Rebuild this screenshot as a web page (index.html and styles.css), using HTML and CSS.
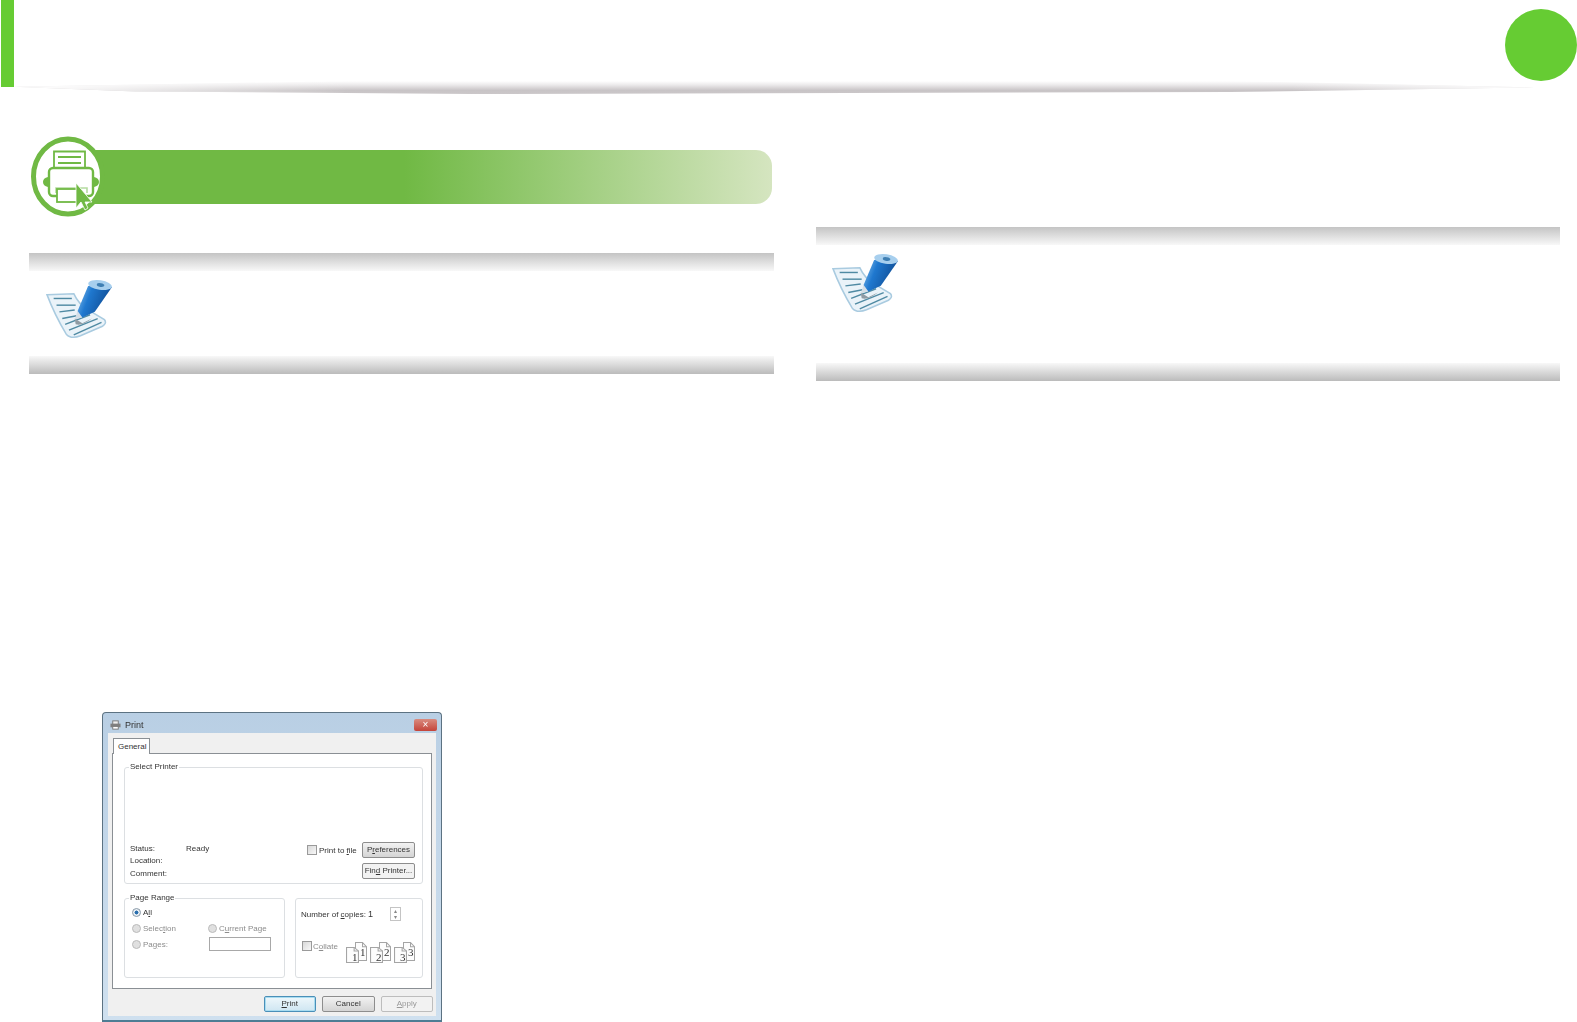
FILE: index.html
```html
<!DOCTYPE html>
<html lang="en">

<head>
  <meta charset="UTF-8">
  <meta name="viewport" content="width=device-width, initial-scale=1.0">
  <title>Printing</title>
  <link rel="stylesheet" href="styles.css">
</head>

<body>
  <svg class="defs" width="0" height="0">
    <defs>
      <linearGradient id="pencil" x1="0" y1="0" x2="1" y2="0.35">
        <stop offset="0" stop-color="#8cc4ee" />
        <stop offset="0.4" stop-color="#1f78cf" />
        <stop offset="1" stop-color="#0f4c94" />
      </linearGradient>
      <symbol id="note-icon" viewBox="0 0 70 64">
        <path d="M1 17 L29 16 Q34 27 44 33 L61 43 Q64 47 59 50 L36 60 Q26 64 21 58 Q9 38 1 17Z" fill="#eaf3f9" stroke="#a9cbe0" stroke-width="1.6" />
        <g fill="none" stroke="#4f8aa3" stroke-width="1.5">
          <path d="M8 21 L27 21" />
          <path d="M11 28 L31 28" />
          <path d="M14 35 L30 33" />
          <path d="M17 42 L32 39" />
          <path d="M20 48 L46 38" />
          <path d="M24 54 L54 42" />
          <path d="M29 59 L58 46" />
        </g>
        <path d="M30 42 L38 47 L48 42 Q38 50 31 48Z" fill="#8f9ba3" />
        <path d="M33 34 L38 41 L30 43Z" fill="#d5dfe7" />
        <path d="M44 8 L33 34 L38 41 L51 35 L69 9Z" fill="url(#pencil)" />
        <ellipse cx="56.500" cy="7" rx="12.500" ry="5" transform="rotate(8 56.500 7)" fill="#a7cfee" />
        <ellipse cx="57" cy="7" rx="4" ry="2" transform="rotate(8 57 7)" fill="#3f7fb3" />
      </symbol>
      <symbol id="doc" viewBox="0 0 12 18" preserveAspectRatio="none">
        <path d="M0.500 0.500 H7.500 L11.500 4.500 V17.500 H0.500Z" fill="#fdfdfd" stroke="#a5a5a5" />
        <path d="M7.500 0.500 V4.500 H11.500" fill="none" stroke="#a5a5a5" />
      </symbol>
    </defs>
  </svg>

  <div class="top-bar">
    <div class="top-stripe"></div>
    <div class="top-line"></div>
    <div class="top-circle"></div>
  </div>

  <div class="columns">
    <div class="col">
      <div class="section-head">
        <div class="section-bar"></div>
        <svg class="section-icon" viewBox="0 0 75 81">
          <ellipse cx="37" cy="40.500" rx="34.500" ry="37.500" fill="#fff" stroke="#70b944" stroke-width="5" />
          <g fill="none" stroke="#70b944">
            <path d="M23 32 V15.500 H54 V32" stroke-width="1.800" />
            <path d="M27 21 H50 M27 27 H50" stroke-width="1.800" />
            <rect x="18" y="32" width="44" height="28" rx="4" stroke-width="2.400" />
            <path d="M25 57 V52 H56 V57" stroke="#b4dba0" stroke-width="1.600" />
          </g>
          <path d="M17 41 Q12 42 12 46 Q12 50 17 51Z M63 41 Q68 42 68 46 Q68 50 63 51Z" fill="#70b944" />
          <rect x="26" y="53" width="20" height="13" fill="#fff" stroke="#70b944" stroke-width="1.800" />
          <path d="M45 47 L45 72 L50 66 L54 74 L57 72 L54 66 L61 66Z" fill="#70b944" stroke="#fff" stroke-width="0.800" />
        </svg>
      </div>

      <div class="note note-left">
        <div class="note-band"></div>
        <div class="note-body">
          <svg class="note-icon"><use href="#note-icon" /></svg>
        </div>
        <div class="note-band bottom"></div>
      </div>

      <div class="dialog">
        <div class="dialog-title">
          <svg class="title-printer" viewBox="0 0 12 10">
            <rect x="3" y="0.500" width="6" height="4" fill="#eee" stroke="#777" />
            <rect x="0.500" y="3.500" width="11" height="4" fill="#7f7f7f" />
            <rect x="3" y="6.500" width="6" height="3" fill="#fff" stroke="#777" />
          </svg>
          <span>Print</span>
          <div class="close-btn">×</div>
        </div>

        <div class="dialog-inner">
          <div class="tab">General</div>
          <div class="panel">
            <fieldset class="group printer-group">
              <legend>Select Printer</legend>
              <div class="printer-rows">
                <div class="status-labels">
                  <div class="status-row"><span class="status-key">Status:</span><span>Ready</span></div>
                  <div class="status-row">Location:</div>
                  <div class="status-row">Comment:</div>
                </div>
                <label class="check print-file"><span class="box"></span><span>Print to <u>f</u>ile</span></label>
                <div class="printer-btns">
                  <div class="btn grey">P<u>r</u>eferences</div>
                  <div class="btn">Fin<u>d</u> Printer...</div>
                </div>
              </div>
            </fieldset>

            <div class="lower-groups">
              <fieldset class="group range-group">
                <legend>Page Range</legend>
                <div class="range-grid">
                  <label class="radio on full"><span class="dot"></span><span>A<u>l</u>l</span></label>
                  <label class="radio off"><span class="dot"></span><span>Selec<u>t</u>ion</span></label>
                  <label class="radio off"><span class="dot"></span><span>C<u>u</u>rrent Page</span></label>
                  <label class="radio off"><span class="dot"></span><span>Pa<u>g</u>es:</span></label>
                  <div class="pages-input"></div>
                </div>
              </fieldset>

              <fieldset class="group copies-group">
                <div class="copies-row">
                  <span class="copies-label">Number of <u>c</u>opies:</span>
                  <div class="copies-input">1</div>
                  <div class="spinner"><span>▴</span><span>▾</span></div>
                </div>
                <div class="collate-row">
                  <label class="check off"><span class="box"></span><span>C<u>o</u>llate</span></label>
                  <div class="collate-docs">
                    <div class="doc-pair"><svg class="doc"><use href="#doc" /></svg><svg class="doc front"><use href="#doc" /></svg><span class="num back-num">1</span><span class="num front-num">1</span></div>
                    <div class="doc-pair"><svg class="doc"><use href="#doc" /></svg><svg class="doc front"><use href="#doc" /></svg><span class="num back-num">2</span><span class="num front-num">2</span></div>
                    <div class="doc-pair"><svg class="doc"><use href="#doc" /></svg><svg class="doc front"><use href="#doc" /></svg><span class="num back-num">3</span><span class="num front-num">3</span></div>
                  </div>
                </div>
              </fieldset>
            </div>
          </div>
          <div class="dialog-footer">
            <div class="btn wide primary"><u>P</u>rint</div>
            <div class="btn wide grey">Cancel</div>
            <div class="btn wide disabled"><u>A</u>pply</div>
          </div>
        </div>
      </div>
    </div>

    <div class="col">
      <div class="note note-right">
        <div class="note-band"></div>
        <div class="note-body">
          <svg class="note-icon"><use href="#note-icon" /></svg>
        </div>
        <div class="note-band bottom"></div>
      </div>
    </div>
  </div>
</body>

</html>
```

FILE: styles.css
```css
* {
  margin: 0;
  padding: 0;
  box-sizing: border-box;
}

html,
body {
  height: 100%;
  overflow: hidden;
}

body {
  font-family: 'Liberation Sans', Arial, sans-serif;
  background: white;
  color: #333;
}

.defs {
  position: absolute;
}

/* top of the page */
.top-bar {
  position: relative;
  height: 95px;
  display: flex;
  justify-content: space-between;
  align-items: flex-start;
}

.top-stripe {
  width: 13px;
  height: 87px;
  margin-left: 1px;
  background: #66cc33;
}

.top-circle {
  width: 72px;
  height: 72px;
  margin-top: 9px;
  border-radius: 50%;
  background: #66cc33;
}

.top-line {
  position: absolute;
  left: 14px;
  top: 81px;
  width: 1520px;
  height: 13px;
  background:
    linear-gradient(90deg, #fff 0%, transparent 22%, transparent 84%, #fff 100%),
    linear-gradient(180deg, #fff 0%, #eceaeb 30%, #c8c4c6 72%, #cbc7c9 100%);
  clip-path: polygon(0 45%, 22% 0, 80% 0, 100% 50%, 80% 85%, 30% 100%, 8% 80%);
}

/* two columns */
.columns {
  display: grid;
  grid-template-columns: 745px 744px;
  column-gap: 42px;
  padding: 55px 0 0 29px;
}

.section-head {
  position: relative;
  height: 54px;
  padding-left: 50px;
}

.section-icon {
  position: absolute;
  left: 2px;
  top: -14px;
  width: 75px;
  height: 81px;
}

.section-bar {
  width: 693px;
  height: 54px;
  border-radius: 0 16px 16px 0;
  background: linear-gradient(90deg, #70b944 0%, #70b944 47%, #d5e5c0 100%);
}

.note {
  display: flex;
  flex-direction: column;
}

.note-left {
  height: 121px;
  margin-top: 49px;
}

.note-right {
  height: 154px;
  margin-top: 77px;
}

.note-band {
  height: 18px;
  background: linear-gradient(180deg, #c4c4c4, #f8f8f8);
}

.note-band.bottom {
  background: linear-gradient(180deg, #f8f8f8, #bbbbbb);
}

.note-body {
  flex: 1;
  padding: 7px 0 0 17px;
}

.note-right .note-body {
  padding-left: 16px;
}

.note-icon {
  display: block;
  width: 67px;
  height: 62px;
  filter: blur(0.4px);
}

/* print dialog picture */
.dialog {
  width: 340px;
  height: 310px;
  margin: 338px 0 0 73px;
  display: flex;
  flex-direction: column;
  background: linear-gradient(180deg, #b9cfe4 0%, #cfe0ef 100%);
  border: 1px solid #5c7282;
  border-bottom: 2px solid #4d7d94;
  border-radius: 4px 4px 0 0;
  font-size: 8px;
  filter: blur(0.35px);
}

.dialog-title {
  height: 20px;
  flex-shrink: 0;
  display: flex;
  align-items: center;
  gap: 4px;
  padding: 4px 4px 0 7px;
  font-size: 9px;
}

.title-printer {
  width: 11px;
  height: 10px;
}

.close-btn {
  width: 23px;
  height: 12px;
  margin-left: auto;
  border-radius: 2px;
  background: linear-gradient(180deg, #d98b7f, #c4443a);
  color: white;
  font-size: 10px;
  line-height: 12px;
  text-align: center;
}

.dialog-inner {
  flex: 1;
  display: flex;
  flex-direction: column;
  margin: 0 5px 4px;
  padding: 5px 4px 0;
  background: #f0f0f0;
}

.tab {
  width: 37px;
  height: 16px;
  margin: 0 0 -1px 1px;
  padding: 3px 0 0 4px;
  background: white;
  border: 1px solid #8a8f94;
  border-bottom: none;
  position: relative;
  z-index: 1;
}

.panel {
  height: 236px;
  padding: 8px 8px 0 11px;
  background: white;
  border: 1px solid #8a8f94;
}

.group {
  border: 1px solid #dcdfe2;
  border-radius: 3px;
}

.group legend {
  margin-left: 4px;
  padding: 0 1px;
  line-height: 10px;
}

.printer-group {
  height: 122px;
}

.printer-rows {
  height: 111px;
  padding: 0 7px 3px 5px;
  display: flex;
  align-items: flex-end;
}

.status-labels {
  width: 177px;
  line-height: 12.5px;
}

.status-row {
  display: flex;
}

.status-key {
  width: 56px;
}

.check {
  display: flex;
  align-items: center;
  gap: 2px;
  white-space: nowrap;
}

.print-file {
  width: 55px;
  height: 16px;
  margin-bottom: 22px;
}

.box {
  width: 10px;
  height: 10px;
  flex-shrink: 0;
  background: linear-gradient(135deg, #d8d8d8, #f8f8f8);
  border: 1px solid #9a9a9a;
}

.printer-btns {
  display: flex;
  flex-direction: column;
  gap: 5px;
  margin-bottom: 1px;
}

.btn {
  width: 53px;
  height: 16px;
  line-height: 14px;
  text-align: center;
  background: #f2f2f2;
  border: 1px solid #8d8d8d;
  border-radius: 2px;
  white-space: nowrap;
}

.btn.grey {
  background: linear-gradient(180deg, #f2f2f2, #d4d4d4);
}

.lower-groups {
  display: flex;
  gap: 10px;
  margin-top: 9px;
}

.range-group {
  width: 161px;
  height: 85px;
}

.range-grid {
  display: grid;
  grid-template-columns: 76px 1fr;
  grid-auto-rows: 16px;
  padding: 1px 0 0 7px;
  align-items: center;
}

.full {
  grid-column: 1 / -1;
}

.radio {
  display: flex;
  align-items: center;
  gap: 2px;
  white-space: nowrap;
}

.radio.off,
.check.off {
  color: #8c8c8c;
}

.dot {
  width: 9px;
  height: 9px;
  flex-shrink: 0;
  border-radius: 50%;
  background: #e0e0e0;
  border: 1px solid #bbb;
}

.radio.on .dot {
  background: radial-gradient(circle, #2a6fae 0 35%, #e8eef3 45%);
  border-color: #8a9aa8;
}

.pages-input {
  width: 62px;
  height: 14px;
  margin-left: 1px;
  background: white;
  border: 1px solid #a8a8a8;
}

.copies-group {
  width: 128px;
  height: 80px;
  margin-top: 5px;
  padding: 7px 0 0 5px;
}

.copies-row {
  display: flex;
  align-items: center;
  height: 16px;
}

.copies-label {
  width: 67px;
  white-space: nowrap;
}

.copies-input {
  width: 22px;
  font-size: 9px;
}

.spinner {
  width: 11px;
  height: 14px;
  display: flex;
  flex-direction: column;
  border: 1px solid #c4c4c4;
  font-size: 6px;
  line-height: 6px;
  text-align: center;
  color: #888;
}

.collate-row {
  display: flex;
  align-items: flex-start;
  margin-top: 18px;
  padding-left: 1px;
}

.collate-row .check {
  width: 44px;
  height: 12px;
  gap: 1px;
}

.collate-docs {
  display: flex;
  gap: 2px;
  margin-top: 2px;
}

.doc-pair {
  position: relative;
  width: 22px;
  height: 22px;
}

.doc {
  position: absolute;
  left: 9px;
  top: 0;
  width: 12px;
  height: 19px;
}

.doc.front {
  left: 0;
  top: 5px;
  width: 13px;
  height: 16px;
}

.num {
  position: absolute;
  font-family: 'Liberation Serif', serif;
  font-size: 11px;
  line-height: 11px;
}

.back-num {
  left: 14px;
  top: 5px;
}

.front-num {
  left: 6px;
  top: 10px;
}

.dialog-footer {
  display: flex;
  gap: 6px;
  justify-content: flex-end;
  padding-top: 7px;
  margin-right: -1px;
}

.btn.wide {
  width: 52.5px;
}

.btn.primary {
  border-color: #4a8fb8;
  background: linear-gradient(180deg, #eef7fb, #cfe6f2);
  box-shadow: inset 0 0 0 1px #a8dcf0;
}

.btn.disabled {
  color: #999;
  border-color: #bdbdbd;
}
```
